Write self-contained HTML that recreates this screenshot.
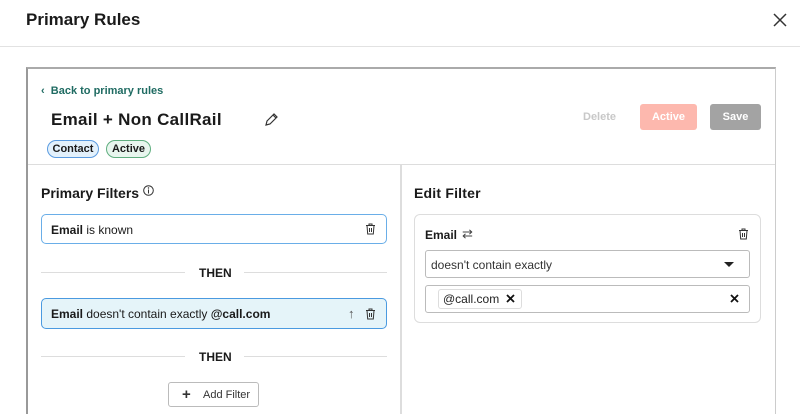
<!DOCTYPE html>
<html style="width:800px;height:414px;overflow:hidden"><head><style>
*{box-sizing:border-box;margin:0;padding:0}
body{width:800px;height:414px;overflow:hidden;background:#fff;font-family:"Liberation Sans",sans-serif;color:#1a1a1a;position:relative}
.a{position:absolute}
.b{font-weight:bold}
.then{font-size:12px;font-weight:bold}
.line{height:1px;background:#ddd}
</style></head><body>
<div class="a b" style="left:26px;top:10px;font-size:17px">Primary Rules</div>
<svg class="a" style="left:773px;top:13px" width="14" height="14"><path d="M1 1L13 13M13 1L1 13" stroke="#333" stroke-width="1.5"/></svg>
<div class="a line" style="left:0;top:46px;width:800px;background:#e2e2e2"></div>

<div class="a" style="left:26px;top:67px;width:750px;height:360px;border:1px solid #ccc;border-top:2px solid #aaa;border-left:2px solid #999;border-bottom:none"></div>
<div class="a" style="left:41px;top:85px;font-size:11px;color:#1f6b62;font-weight:bold">‹&nbsp; Back to primary rules</div>
<div class="a b" style="left:51px;top:110px;font-size:17px;letter-spacing:0.3px">Email + Non CallRail</div>
<svg class="a" style="left:264px;top:112px" width="15" height="15"><path d="M2 13L3 9L10 2L13 5L6 12Z M9 3L12 6" stroke="#333" stroke-width="1.2" fill="none"/></svg>
<div class="a" style="left:47px;top:140px;width:52px;height:18px;border:1px solid #5a9be0;background:#e3f1fc;border-radius:9px;font-size:11px;font-weight:bold;text-align:center;line-height:17px">Contact</div>
<div class="a" style="left:106px;top:140px;width:45px;height:18px;border:1px solid #5fae7f;background:#e8f6ee;border-radius:9px;font-size:11px;font-weight:bold;text-align:center;line-height:17px">Active</div>
<div class="a" style="left:583px;top:111px;font-size:11px;font-weight:bold;color:#c8c8c8">Delete</div>
<div class="a" style="left:640px;top:104px;width:57px;height:26px;background:#fdb8ae;border-radius:3px;color:#fff;font-size:11px;font-weight:bold;text-align:center;line-height:26px">Active</div>
<div class="a" style="left:710px;top:104px;width:51px;height:26px;background:#a3a3a3;border-radius:3px;color:#fff;font-size:11px;font-weight:bold;text-align:center;line-height:26px">Save</div>
<div class="a line" style="left:28px;top:164px;width:747px"></div>
<div class="a" style="left:400px;top:165px;width:2px;height:250px;background:#ddd"></div>

<div class="a b" style="left:41px;top:185px;font-size:14px">Primary Filters</div>
<svg class="a" style="left:143px;top:185px" width="11" height="11"><circle cx="5.5" cy="5.5" r="4.8" stroke="#333" fill="none"/><path d="M5.5 4.5V8.5" stroke="#333"/><circle cx="5.5" cy="3" r=".7" fill="#333"/></svg>
<div class="a" style="left:41px;top:214px;width:346px;height:30px;border:1px solid #6aaee8;border-radius:5px;font-size:12px;line-height:30px;padding-left:9px"><b>Email</b> is known</div>
<svg class="a" style="left:365px;top:223px" width="11" height="12"><path d="M1 2.5H10M4 2.5V1H7V2.5M2 2.5L2.7 11H8.3L9 2.5M4.5 5V9M6.5 5V9" stroke="#333" fill="none"/></svg>
<div class="a line" style="left:41px;top:272px;width:144px"></div>
<div class="a then" style="left:199px;top:266px">THEN</div>
<div class="a line" style="left:244px;top:272px;width:143px"></div>
<div class="a" style="left:41px;top:298px;width:346px;height:31px;border:1.5px solid #4a9ae0;background:#e5f4f9;border-radius:5px;font-size:12px;line-height:30px;padding-left:9px"><b>Email</b> doesn't contain exactly <b>@call.com</b></div>
<div class="a" style="left:348px;top:306px;font-size:13px;color:#555">↑</div>
<svg class="a" style="left:365px;top:308px" width="11" height="12"><path d="M1 2.5H10M4 2.5V1H7V2.5M2 2.5L2.7 11H8.3L9 2.5M4.5 5V9M6.5 5V9" stroke="#333" fill="none"/></svg>
<div class="a line" style="left:41px;top:356px;width:144px"></div>
<div class="a then" style="left:199px;top:350px">THEN</div>
<div class="a line" style="left:244px;top:356px;width:143px"></div>
<div class="a" style="left:168px;top:382px;width:91px;height:25px;border:1px solid #bbb;border-radius:3px;font-size:11px;line-height:25px;color:#333"><span style="position:absolute;left:13px;top:0;font-size:15px;font-weight:bold;line-height:24px">+</span><span style="position:absolute;left:34px;top:0">Add Filter</span></div>

<div class="a b" style="left:414px;top:185px;font-size:14px;letter-spacing:0.2px">Edit Filter</div>
<div class="a" style="left:414px;top:214px;width:347px;height:109px;border:1px solid #ddd;border-radius:6px"></div>
<div class="a b" style="left:425px;top:228px;font-size:12px">Email</div>
<div class="a" style="left:462px;top:226px;font-size:13px;color:#444">⇄</div>
<svg class="a" style="left:738px;top:228px" width="11" height="12"><path d="M1 2.5H10M4 2.5V1H7V2.5M2 2.5L2.7 11H8.3L9 2.5M4.5 5V9M6.5 5V9" stroke="#333" fill="none"/></svg>
<div class="a" style="left:425px;top:250px;width:325px;height:28px;border:1px solid #bbb;border-radius:3px;font-size:12px;line-height:28px;padding-left:5px;color:#333">doesn't contain exactly</div>
<svg class="a" style="left:724px;top:262px" width="10" height="6"><path d="M0 0H10L5 5Z" fill="#222"/></svg>
<div class="a" style="left:425px;top:285px;width:325px;height:28px;border:1px solid #bbb;border-radius:3px"></div>
<div class="a" style="left:438px;top:289px;width:84px;height:20px;border:1px solid #ddd;border-radius:3px;font-size:12px;line-height:19px;padding-left:4px;color:#222">@call.com</div>
<svg class="a" style="left:506px;top:294px" width="9" height="9"><path d="M1 1L8 8M8 1L1 8" stroke="#111" stroke-width="1.8"/></svg>
<svg class="a" style="left:730px;top:294px" width="9" height="9"><path d="M1 1L8 8M8 1L1 8" stroke="#111" stroke-width="1.8"/></svg>
</body></html>
